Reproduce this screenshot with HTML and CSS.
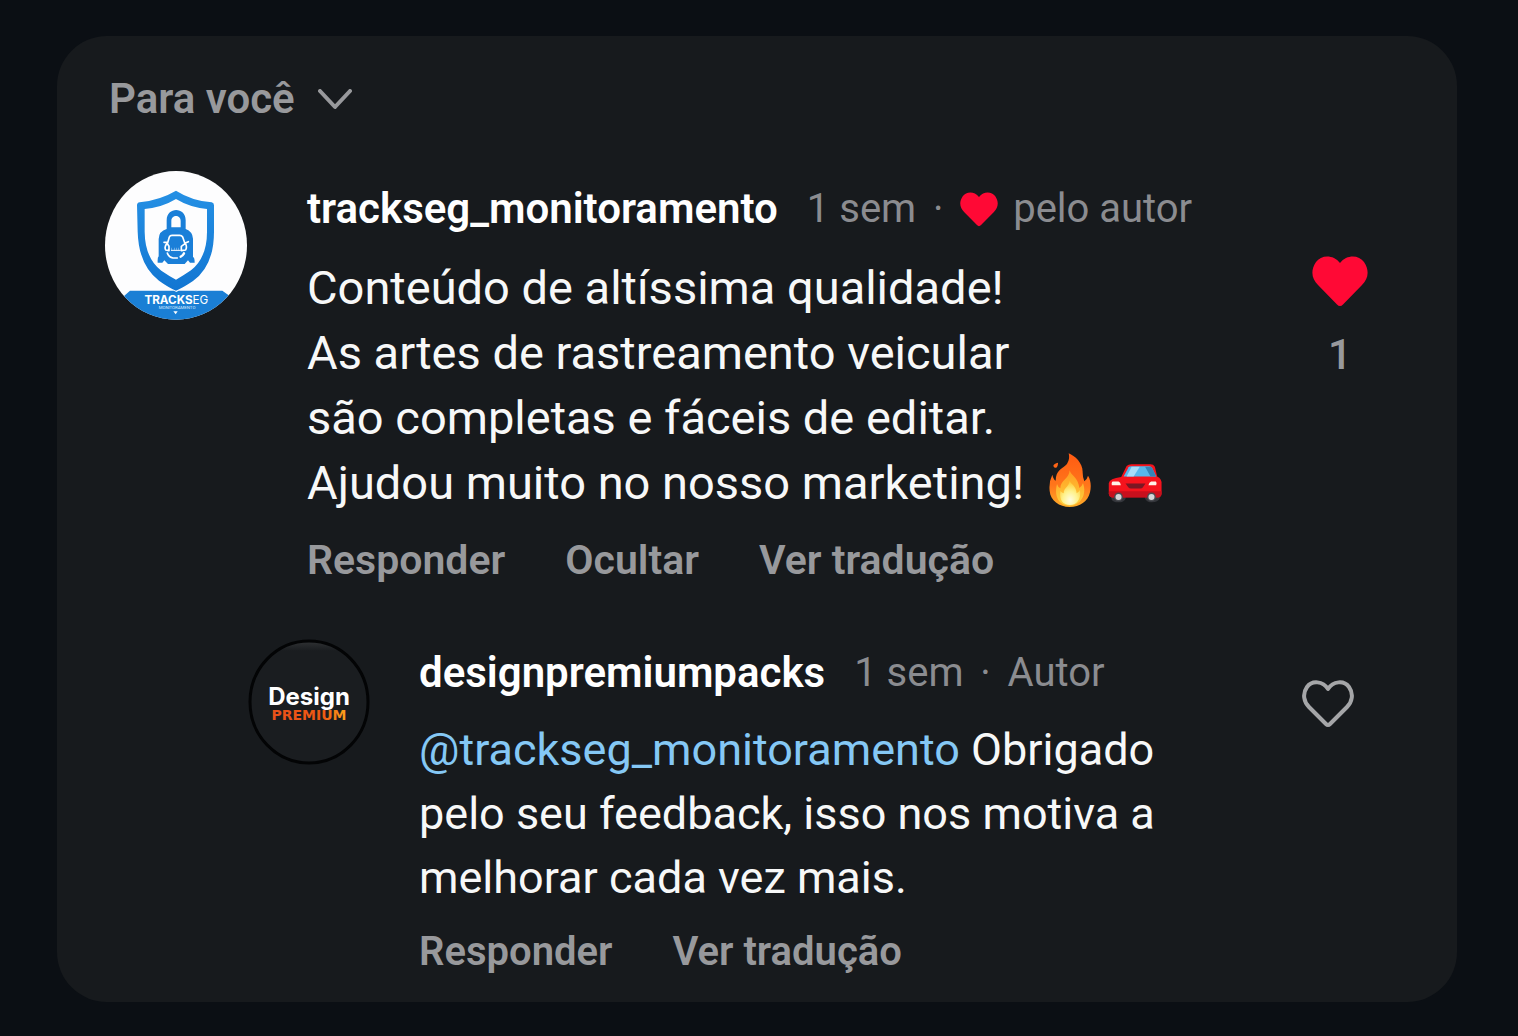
FILE: index.html
```html
<!DOCTYPE html>
<html lang="pt-BR">

<head>
    <meta charset="UTF-8">
    <meta name="viewport" content="width=device-width, initial-scale=1.0">
    <title>Comentários</title>
    <link rel="stylesheet" href="styles.css">
</head>

<body>
    <main class="card">
        <button class="filter" type="button">
            Para você
            <svg class="chevron" viewBox="0 0 34 21" aria-hidden="true">
                <path d="M2 2L17 18L32 2" />
            </svg>
        </button>

        <article class="comment">
            <svg class="avatar" viewBox="30 33 426 447" role="img" aria-label="Trackseg">
                <defs>
                    <clipPath id="round">
                        <ellipse cx="243" cy="256" rx="213" ry="223" />
                    </clipPath>
                    <linearGradient id="blue" x1="0" y1="0" x2="0" y2="1">
                        <stop offset="0" stop-color="#2590e4" />
                        <stop offset="1" stop-color="#1276d2" />
                    </linearGradient>
                </defs>
                <g clip-path="url(#round)">
                    <rect x="30" y="33" width="426" height="447" fill="#fdfdfe" />
                    <!-- shield -->
                    <path fill="url(#blue)" fill-rule="evenodd" d="M243 92Q290 122 350 127Q357 128 357 136V215Q357 318 294 363Q266 382 243 392Q220 382 192 362Q131 316 128 215L126 136Q126 128 134 127Q196 120 243 92ZM243 117Q202 142 149 147V215Q150 295 199 332Q221 347 243 359Q265 347 288 331Q336 293 336 215V147Q284 142 243 117Z" />
                    <!-- padlock -->
                    <path fill="#1a7fd8" fill-rule="evenodd" d="M215 207V181C215 140 272 140 272 181V207Q293 215 294 236V291Q299 292 299 308H285L279 301L269 312H219L208 301L202 308H188Q187 292 191 289V237Q192 213 215 207ZM229 202H257V183C257 163 229 163 229 183Z" />
                    <!-- car on the padlock -->
                    <g fill="none" stroke="#fff" stroke-width="5" stroke-linecap="round" stroke-linejoin="round">
                        <path d="M218 248L223 231Q225 226 231 226H254Q260 226 263 231L269 248M207 247H218M269 250L280 245M216 250Q207 260 212 270L222 272V259ZM271 250Q277 260 272 270L259 272V259ZM217 279Q221 292 234 294H247" />
                        <path d="M257 290Q264 287 267 280" stroke-width="7" />
                        <path d="M230 267H254" stroke-width="7" stroke-dasharray="1 6" stroke-linecap="butt" />
                        <path d="M229 271H256" stroke-width="3" />
                    </g>
                    <path fill="#1a7fd5" d="M88 407L105 392H237L244 396L251 392H382L400 405V480H88Z" />
                    <text class="seal-name" x="244" y="431">TRACKS<tspan font-weight="400">EG</tspan></text>
                    <text class="seal-small" x="246" y="446">MONITORAMENTO</text>
                    <path fill="#fff" d="M235 454H248L242 463Z" />
                </g>
            </svg>
            <div class="body">
                <div class="meta">
                    <a class="user" href="#">trackseg_monitoramento</a>
                    <time>1 sem</time>
                    <span class="dot">·</span>
                    <svg class="heart-small" viewBox="0 0 56 51" aria-hidden="true">
                        <path d="M28 7C35-2 47-1 52 6C58 15 56 23 50 29L31 48.500Q28 51.500 25 48.500L6 29C0 23-2 15 4 6C9-1 21-2 28 7Z" />
                    </svg>
                    <span class="by">pelo autor</span>
                </div>
                <p class="text">Conteúdo de altíssima qualidade!<br>
                    As artes de rastreamento veicular<br>
                    são completas e fáceis de editar.<br>
                    Ajudou muito no nosso marketing!
                    <svg class="fire" viewBox="57 25 126 162" role="img" aria-label="fogo">
                        <defs>
                            <linearGradient id="flame" x1="0" y1="0" x2="0" y2="1">
                                <stop offset="0" stop-color="#ff5a12" />
                                <stop offset="0.6" stop-color="#ff761b" />
                                <stop offset="1" stop-color="#ffad28" />
                            </linearGradient>
                            <linearGradient id="mid" x1="0" y1="0" x2="0" y2="1">
                                <stop offset="0" stop-color="#ff9b20" />
                                <stop offset="1" stop-color="#ffd33f" />
                            </linearGradient>
                            <radialGradient id="core" cx="0.5" cy="0.8" r="0.75">
                                <stop offset="0" stop-color="#fffce0" />
                                <stop offset="0.5" stop-color="#fff28c" />
                                <stop offset="1" stop-color="#ffc52f" />
                            </radialGradient>
                        </defs>
                        <path fill="url(#flame)" d="M116 26C135 34 159 55 158 84Q158 98 163 110Q171 105 174 93C183 107 184 126 180 143C174 171 149 187 119 187C88 187 61 168 59 139Q56 112 67 90Q70 104 77 108C78 78 93 74 107 62Q121 47 116 26ZM84 54Q85 63 79 69Q71 71 70 63Q72 57 84 54Z" />
                        <path fill="url(#mid)" d="M119 77C122 92 145 99 148 130Q156 125 159 115C172 151 151 183 119 183C89 183 71 158 81 118Q84 128 91 131C91 106 117 104 119 77Z" />
                        <path fill="url(#core)" d="M119 108C124 120 139 124 140 146Q147 142 150 136C154 165 140 181 120 181C99 181 87 167 91 139Q96 145 101 146C101 128 117 127 119 108Z" />
                    </svg>
                    <svg class="car" viewBox="237 59 158 116" role="img" aria-label="carro">
                        <path fill="#34363b" d="M244 142H288V162Q283 173 267 173Q249 173 246 163ZM345 142H390V160Q384 173 367 173Q351 173 346 162Z" />
                        <path fill="#f5131d" d="M291 65Q296 60 306 60H362Q371 60 375 67L382 96Q396 103 395 118V143Q396 155 387 158H247Q238 156 238 145V116Q240 103 275 98Z" />
                        <path fill="#c9101d" d="M239 140H395V147Q395 157 386 159H247Q239 157 238 147Z" />
                        <path fill="#58b7ec" d="M297 69Q299 66 305 66H358Q364 66 367 71L379 96H282Z" />
                        <path fill="#a8dcf8" d="M306 67H330L312 96H291Z" />
                        <path fill="#3484b8" d="M346 67H358Q364 66 367 71L379 96H362Z" />
                        <path fill="#7a1723" d="M288 117H347L339 129Q337 132 332 132H304Q299 132 296 128Z" />
                        <path fill="#fff1e7" d="M249 111H267Q273 113 274 122H247Q245 115 249 111ZM364 111H378Q382 115 379 122H356Q358 113 364 111Z" />
                        <circle cx="267" cy="157" r="13" fill="#4b4d52" />
                        <circle cx="365" cy="157" r="13" fill="#4b4d52" />
                        <circle cx="267" cy="157" r="9" fill="#d5d6d8" />
                        <circle cx="365" cy="157" r="9" fill="#d5d6d8" />
                    </svg>
                </p>
                <div class="actions">
                    <button type="button">Responder</button>
                    <button type="button">Ocultar</button>
                    <button type="button">Ver tradução</button>
                </div>
            </div>
            <button class="like liked" type="button" aria-label="Descurtir">
                <svg viewBox="0 0 56 51" aria-hidden="true">
                    <path d="M28 7C35-2 47-1 52 6C58 15 56 23 50 29L31 48.500Q28 51.500 25 48.500L6 29C0 23-2 15 4 6C9-1 21-2 28 7Z" />
                </svg>
                <span>1</span>
            </button>
        </article>

        <article class="comment reply">
            <svg class="avatar" viewBox="0 0 122 126" role="img" aria-label="Design Premium">
                <defs>
                    <linearGradient id="orange">
                        <stop offset="0" stop-color="#e8501a" />
                        <stop offset="0.7" stop-color="#f05a12" />
                        <stop offset="1" stop-color="#fba41c" />
                    </linearGradient>
                    <linearGradient id="shine" x1="0" y1="0" x2="0" y2="1">
                        <stop offset="0" stop-color="#303234" />
                        <stop offset="0.08" stop-color="#1a1d20" />
                    </linearGradient>
                </defs>
                <ellipse cx="61" cy="63" rx="59" ry="61" fill="url(#shine)" stroke="#030405" stroke-width="3" />
                <text class="logo-bottom" x="61" y="81" fill="url(#orange)">PREMIUM</text>
                <text class="logo-top" x="61" y="66">Design</text>
            </svg>
            <div class="body">
                <div class="meta">
                    <a class="user" href="#">designpremiumpacks</a>
                    <time>1 sem</time>
                    <span class="dot">·</span>
                    <span class="by">Autor</span>
                </div>
                <p class="text"><a class="mention" href="#">@trackseg_monitoramento</a> Obrigado<br>
                    pelo seu feedback, isso nos motiva a<br>
                    melhorar cada vez mais.</p>
                <div class="actions">
                    <button type="button">Responder</button>
                    <button type="button">Ver tradução</button>
                </div>
            </div>
            <button class="like" type="button" aria-label="Curtir">
                <svg viewBox="0 0 52 48" aria-hidden="true">
                    <path d="M26 10C31 2 42 1 47 8C52 15 50 23 45 28L28 45Q26 47 24 45L7 28C2 23 0 15 5 8C10 1 21 2 26 10Z" />
                </svg>
            </button>
        </article>
    </main>
</body>

</html>
```
FILE: styles.css
```css
* {
    box-sizing: border-box;
    margin: 0;
    padding: 0;
}

body {
    min-height: 100vh;
    padding: 36px 61px 34px 57px;
    background-color: #0b0f14;
    color: #f7f8f8;
    font-family: Roboto, "Liberation Sans", sans-serif;
    font-size: 42px;
    line-height: 48px;
}

button {
    border: 0;
    background: none;
    color: #98999c;
    font: inherit;
    cursor: pointer;
}

a {
    color: inherit;
    text-decoration: none;
}

svg {
    display: block;
    flex: none;
}

.card {
    padding: 39px 48px 26px;
    border-radius: 50px;
    background-color: #171a1d;
}

.filter {
    display: flex;
    align-items: center;
    gap: 23px;
    margin: 0 0 48px 4px;
    font-weight: 600;
}

.chevron {
    width: 34px;
    height: 21px;
    fill: none;
    stroke: #98999c;
    stroke-width: 4;
    stroke-linecap: round;
    stroke-linejoin: round;
}

.comment {
    display: flex;
    align-items: flex-start;
}

.avatar {
    width: 142px;
    height: 149px;
    margin-right: 60px;
}

.body {
    flex: 1;
    padding-top: 14px;
}

.meta {
    display: flex;
    align-items: center;
    margin-bottom: 22px;
    color: #8b8c90;
    font-size: 40px;
    white-space: nowrap;
}

.user {
    margin-right: 29px;
    color: #fff;
    font-size: 42px;
    font-weight: 600;
}

.dot {
    width: 44px;
    text-align: center;
}

.heart-small {
    width: 38px;
    height: 35px;
    margin-right: 15px;
    fill: #ff0935;
}

.text {
    font-size: 47px;
    line-height: 65px;
    white-space: nowrap;
}

.text svg {
    display: inline-block;
}

.fire {
    width: 42px;
    height: 54px;
    margin: 0 6px 0 13px;
    vertical-align: -8px;
}

.car {
    width: 54px;
    height: 39px;
    vertical-align: -4px;
}

.actions {
    display: flex;
    gap: 60px;
    margin-top: 21px;
}

.actions button {
    font-size: 41px;
    font-weight: 600;
}

.like {
    display: flex;
    flex-direction: column;
    align-items: center;
    gap: 24px;
    margin: 85px 41px 0 0;
    font-weight: 500;
}

.like svg {
    width: 56px;
    height: 51px;
}

.liked svg {
    fill: #ff0935;
}

.mention {
    color: #85c8f5;
}

/* reply */
.reply {
    margin: 55px 0 0 143px;
}

.reply .avatar {
    width: 122px;
    height: 126px;
    margin-right: 49px;
}

.reply .body {
    padding-top: 10px;
}

.reply .meta {
    margin-bottom: 21px;
}

.reply .text {
    font-size: 45px;
    line-height: 64px;
}

.reply .actions {
    margin-top: 18px;
}

.reply .actions button {
    font-size: 40px;
}

.reply .like {
    margin: 40px 55px 0 0;
}

.reply .like svg {
    width: 52px;
    height: 48px;
    fill: none;
    stroke: #a5a6a8;
    stroke-width: 4;
    stroke-linejoin: round;
}

/* lettering inside the avatars */
.seal-name {
    fill: #fff;
    font-family: Inter, sans-serif;
    font-size: 35px;
    font-weight: 700;
    text-anchor: middle;
}

.seal-small {
    fill: #d8ecff;
    font-size: 13px;
    text-anchor: middle;
}

.logo-top {
    fill: #fff;
    font-family: Inter, sans-serif;
    font-size: 24px;
    font-weight: 700;
    text-anchor: middle;
}

.logo-bottom {
    font-family: "DejaVu Sans", sans-serif;
    font-size: 14px;
    font-weight: 700;
    text-anchor: middle;
}
```
